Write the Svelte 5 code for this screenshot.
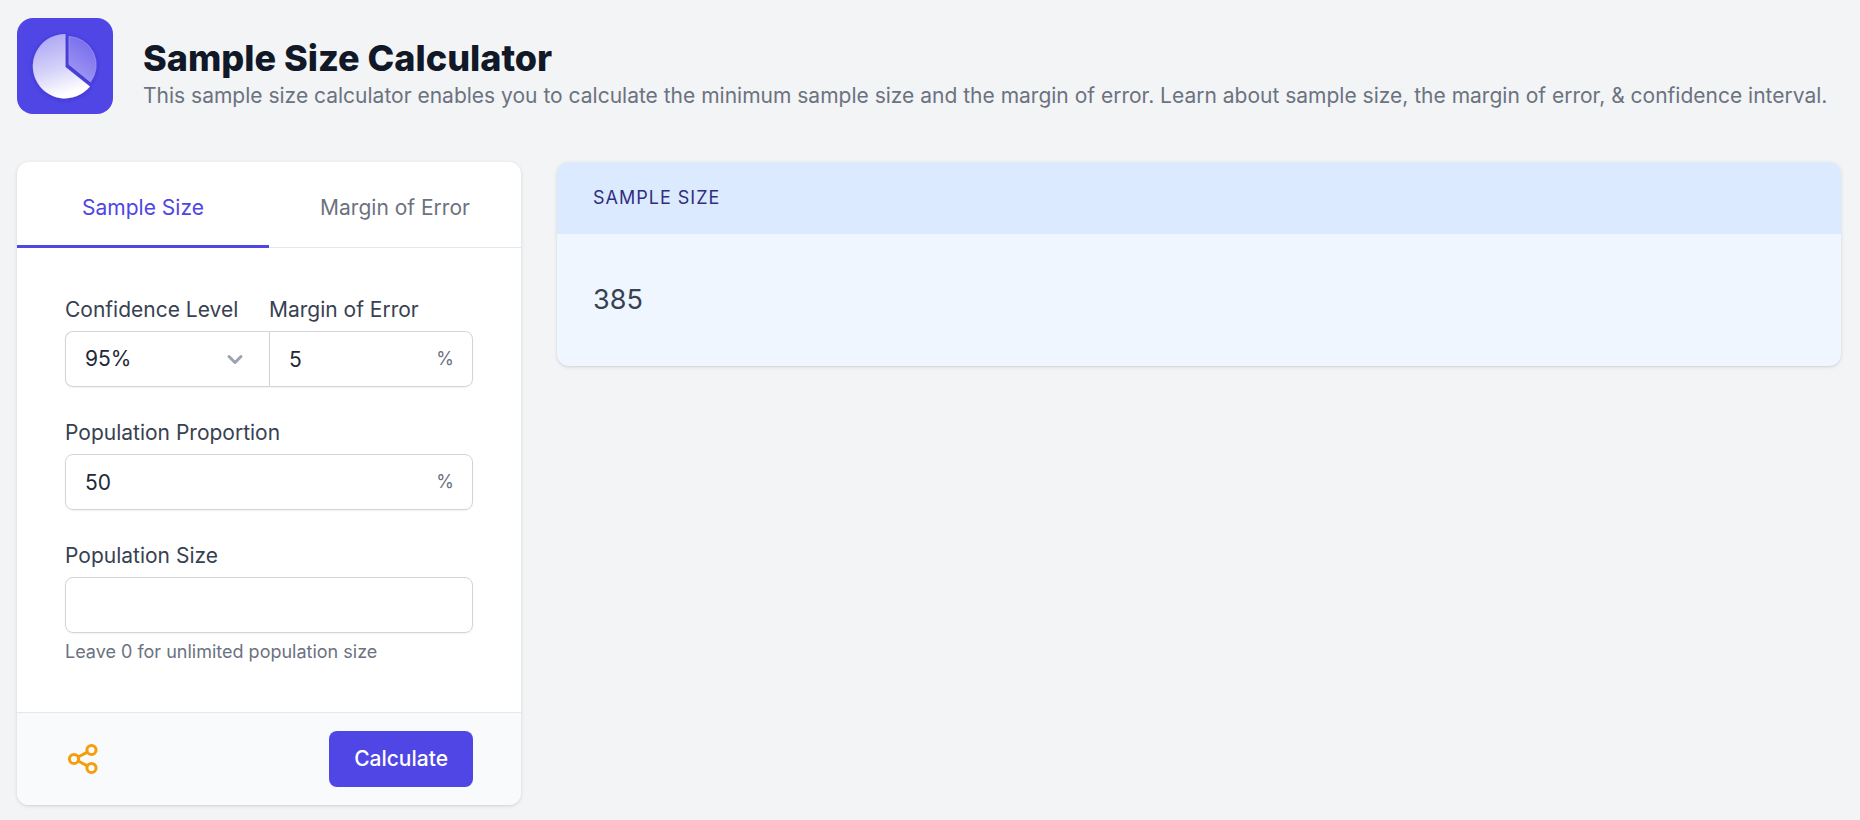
<script lang="ts">
  type Tab = "size" | "margin";

  // z-scores for the confidence levels offered in the drop-down
  const zScores: Record<string, number> = {
    "80": 1.282,
    "85": 1.44,
    "90": 1.645,
    "95": 1.96,
    "98": 2.326,
    "99": 2.576,
  };

  let tab: Tab = "size";
  let confidence = "95";
  let margin = "5";
  let sampleSize = "385";
  let proportion = "50";
  let population = "";
  let resultTitle = "Sample Size";
  let result = "385";

  function calculate() {
    const z = zScores[confidence];
    const p = Number(proportion) / 100;
    const total = Number(population);

    if (tab === "size") {
      const e = Number(margin) / 100;
      let n = (z * z * p * (1 - p)) / (e * e);
      if (total > 0) {
        n = n / (1 + n / total);
      }
      resultTitle = "Sample Size";
      result = String(Math.ceil(n));
    } else {
      const n = Number(sampleSize);
      let e = z * Math.sqrt((p * (1 - p)) / n);
      if (total > n) {
        e = e * Math.sqrt((total - n) / (total - 1));
      }
      resultTitle = "Margin of Error";
      result = (e * 100).toFixed(2) + "%";
    }
  }
</script>

<div class="page">
  <header class="header">
    <svg class="logo" viewBox="0 0 96 96" aria-hidden="true">
      <defs>
        <linearGradient id="pie-main" x1="0.25" y1="0.1" x2="0.5" y2="1">
          <stop offset="0" stop-color="#b3adf5" />
          <stop offset="0.5" stop-color="#d5d2fa" />
          <stop offset="0.95" stop-color="#ffffff" />
        </linearGradient>
        <linearGradient id="pie-slice" x1="0.7" y1="0" x2="0.3" y2="1">
          <stop offset="0" stop-color="#7468ec" />
          <stop offset="1" stop-color="#a29bf4" />
        </linearGradient>
        <filter id="pie-shadow" x="-20%" y="-20%" width="140%" height="140%">
          <feDropShadow dx="0" dy="1" stdDeviation="2" flood-color="#2c22a8" flood-opacity="0.5" />
        </filter>
      </defs>
      <rect width="96" height="96" rx="16" fill="#4f46e5" />
      <g filter="url(#pie-shadow)">
        <path d="M48.500 16A32.200 32.200 0 1 0 73 68.500L48.500 49Z" fill="url(#pie-main)" />
        <path d="M52 18.500A28.500 28.500 0 0 1 73.500 64L52 46.500Z" fill="url(#pie-slice)" stroke="#9890f2" stroke-width="0.800" />
      </g>
    </svg>
    <div class="heading">
      <h1>Sample Size Calculator</h1>
      <p>
        This sample size calculator enables you to calculate the minimum sample size and the margin of error. Learn about
        sample size, the margin of error, &amp; confidence interval.
      </p>
    </div>
  </header>

  <main class="columns">
    <form class="card" on:submit|preventDefault={calculate}>
      <!-- Tabs -->
      <div class="tabs">
        <button type="button" class:active={tab === "size"} on:click={() => (tab = "size")}>Sample Size</button>
        <button type="button" class:active={tab === "margin"} on:click={() => (tab = "margin")}>Margin of Error</button>
      </div>

      <!-- Fields -->
      <div class="fields">
        <div class="pair">
          <div class="field">
            <label for="confidence">Confidence Level</label>
            <div class="control left">
              <select id="confidence" bind:value={confidence}>
                {#each Object.keys(zScores) as level}
                  <option value={level}>{level}%</option>
                {/each}
              </select>
              <svg class="chevron" viewBox="0 0 24 24" aria-hidden="true">
                <path d="M6 9.500L12 15.500L18 9.500" />
              </svg>
            </div>
          </div>
          <div class="field">
            {#if tab === "size"}
              <label for="margin">Margin of Error</label>
              <div class="control right">
                <input id="margin" type="text" inputmode="decimal" bind:value={margin} />
                <span class="unit">%</span>
              </div>
            {:else}
              <label for="sample">Sample Size</label>
              <div class="control right">
                <input id="sample" type="text" inputmode="numeric" bind:value={sampleSize} />
              </div>
            {/if}
          </div>
        </div>

        <div class="field">
          <label for="proportion">Population Proportion</label>
          <div class="control">
            <input id="proportion" type="text" inputmode="decimal" bind:value={proportion} />
            <span class="unit">%</span>
          </div>
        </div>

        <div class="field">
          <label for="population">Population Size</label>
          <div class="control">
            <input id="population" type="text" inputmode="numeric" aria-describedby="population-hint" bind:value={population} />
          </div>
          <p class="hint" id="population-hint">Leave 0 for unlimited population size</p>
        </div>
      </div>

      <!-- Actions -->
      <div class="actions">
        <button type="button" class="share" aria-label="Share">
          <svg viewBox="0 0 36 36" aria-hidden="true">
            <circle cx="9" cy="18" r="4.600" />
            <circle cx="26.500" cy="9" r="4.600" />
            <circle cx="26.500" cy="27" r="4.600" />
            <path d="M13.200 16L22.300 11.100M13.200 20L22.300 24.900" />
          </svg>
        </button>
        <button type="submit" class="calculate">Calculate</button>
      </div>
    </form>

    <section class="result">
      <h2>{resultTitle}</h2>
      <p>{result}</p>
    </section>
  </main>
</div>

<style>
  :global(body) {
    background-color: #f3f4f6;
  }

  .page {
    box-sizing: border-box;
    padding: 18px 19px 15px 17px;
    font-family: Inter, "Liberation Sans", sans-serif;
    font-size: 21px;
    line-height: 32px;
    color: #374151;
  }

  .page * {
    box-sizing: border-box;
  }

  h1,
  h2,
  p {
    margin: 0;
  }

  button,
  input,
  select {
    font: inherit;
    color: inherit;
    margin: 0;
    padding: 0;
    border: 0;
    background: none;
  }

  button {
    cursor: pointer;
  }

  .header {
    display: flex;
    align-items: center;
    gap: 30px;
    margin-bottom: 48px;
  }

  .logo {
    flex: none;
    width: 96px;
    height: 96px;
  }

  .heading {
    padding-top: 15px;
  }

  h1 {
    font-size: 36px;
    line-height: 44px;
    font-weight: 800;
    color: #111827;
  }

  .heading p {
    color: #6b7280;
  }

  .columns {
    display: grid;
    grid-template-columns: 504px 1fr;
    align-items: start;
    gap: 36px;
  }

  .card,
  .result {
    overflow: hidden;
    border-radius: 12px;
    box-shadow:
      0 1px 4px rgba(0, 0, 0, 0.1),
      0 1px 2px rgba(0, 0, 0, 0.06);
  }

  .card {
    background-color: #fff;
  }

  .tabs {
    display: flex;
    border-bottom: 1px solid #e5e7eb;
  }

  .tabs button {
    flex: 1;
    height: 86px;
    margin-bottom: -1px;
    padding-top: 8px;
    border-bottom: 3px solid transparent;
    color: #6b7280;
  }

  .tabs .active {
    border-color: #4f46e5;
    color: #4f46e5;
  }

  .fields {
    display: flex;
    flex-direction: column;
    gap: 30px;
    padding: 46px 48px;
  }

  .pair {
    display: grid;
    grid-template-columns: repeat(2, minmax(0, 1fr));
  }

  label {
    display: block;
    margin-bottom: 5px;
    white-space: nowrap;
  }

  .control {
    display: flex;
    align-items: center;
    position: relative;
    height: 56px;
    border: 1px solid #d1d5db;
    border-radius: 8px;
    box-shadow: 0 1px 2px rgba(0, 0, 0, 0.05);
    color: #1f2937;
  }

  .control.left {
    border-right: 0;
    border-radius: 8px 0 0 8px;
  }

  .control.right {
    border-radius: 0 8px 8px 0;
  }

  input,
  select {
    flex: 1;
    width: 100%;
    min-width: 0;
    height: 100%;
    padding: 0 19px;
    appearance: none;
    outline: none;
  }

  .control:focus-within {
    border-color: #4f46e5;
  }

  .chevron {
    position: absolute;
    right: 22px;
    width: 24px;
    height: 24px;
    fill: none;
    stroke: #9ca3af;
    stroke-width: 3;
    stroke-linecap: round;
    stroke-linejoin: round;
    pointer-events: none;
  }

  .unit {
    padding-right: 18px;
    font-size: 18px;
    color: #6b7280;
  }

  .hint {
    margin-top: 5px;
    font-size: 18px;
    line-height: 28px;
    color: #6b7280;
  }

  .actions {
    display: flex;
    align-items: center;
    justify-content: space-between;
    padding: 18px 48px;
    border-top: 1px solid #e5e7eb;
    background-color: #f9fafb;
  }

  .share,
  .share svg {
    display: block;
    width: 36px;
    height: 36px;
  }

  .share svg {
    fill: none;
    stroke: #f59e0b;
    stroke-width: 3;
  }

  .calculate {
    height: 56px;
    padding: 0 25px;
    border-radius: 8px;
    background-color: #4f46e5;
    font-weight: 500;
    color: #fff;
  }

  .result {
    background-color: #eff6ff;
  }

  .result h2 {
    padding: 20px 36px;
    background-color: #dbeafe;
    font-size: 18px;
    font-weight: 400;
    letter-spacing: 1px;
    text-transform: uppercase;
    color: #312e81;
  }

  .result p {
    padding: 48px 36px;
    font-size: 27px;
    line-height: 36px;
  }

  @media (max-width: 1000px) {
    .columns {
      grid-template-columns: 1fr;
    }
  }
</style>
